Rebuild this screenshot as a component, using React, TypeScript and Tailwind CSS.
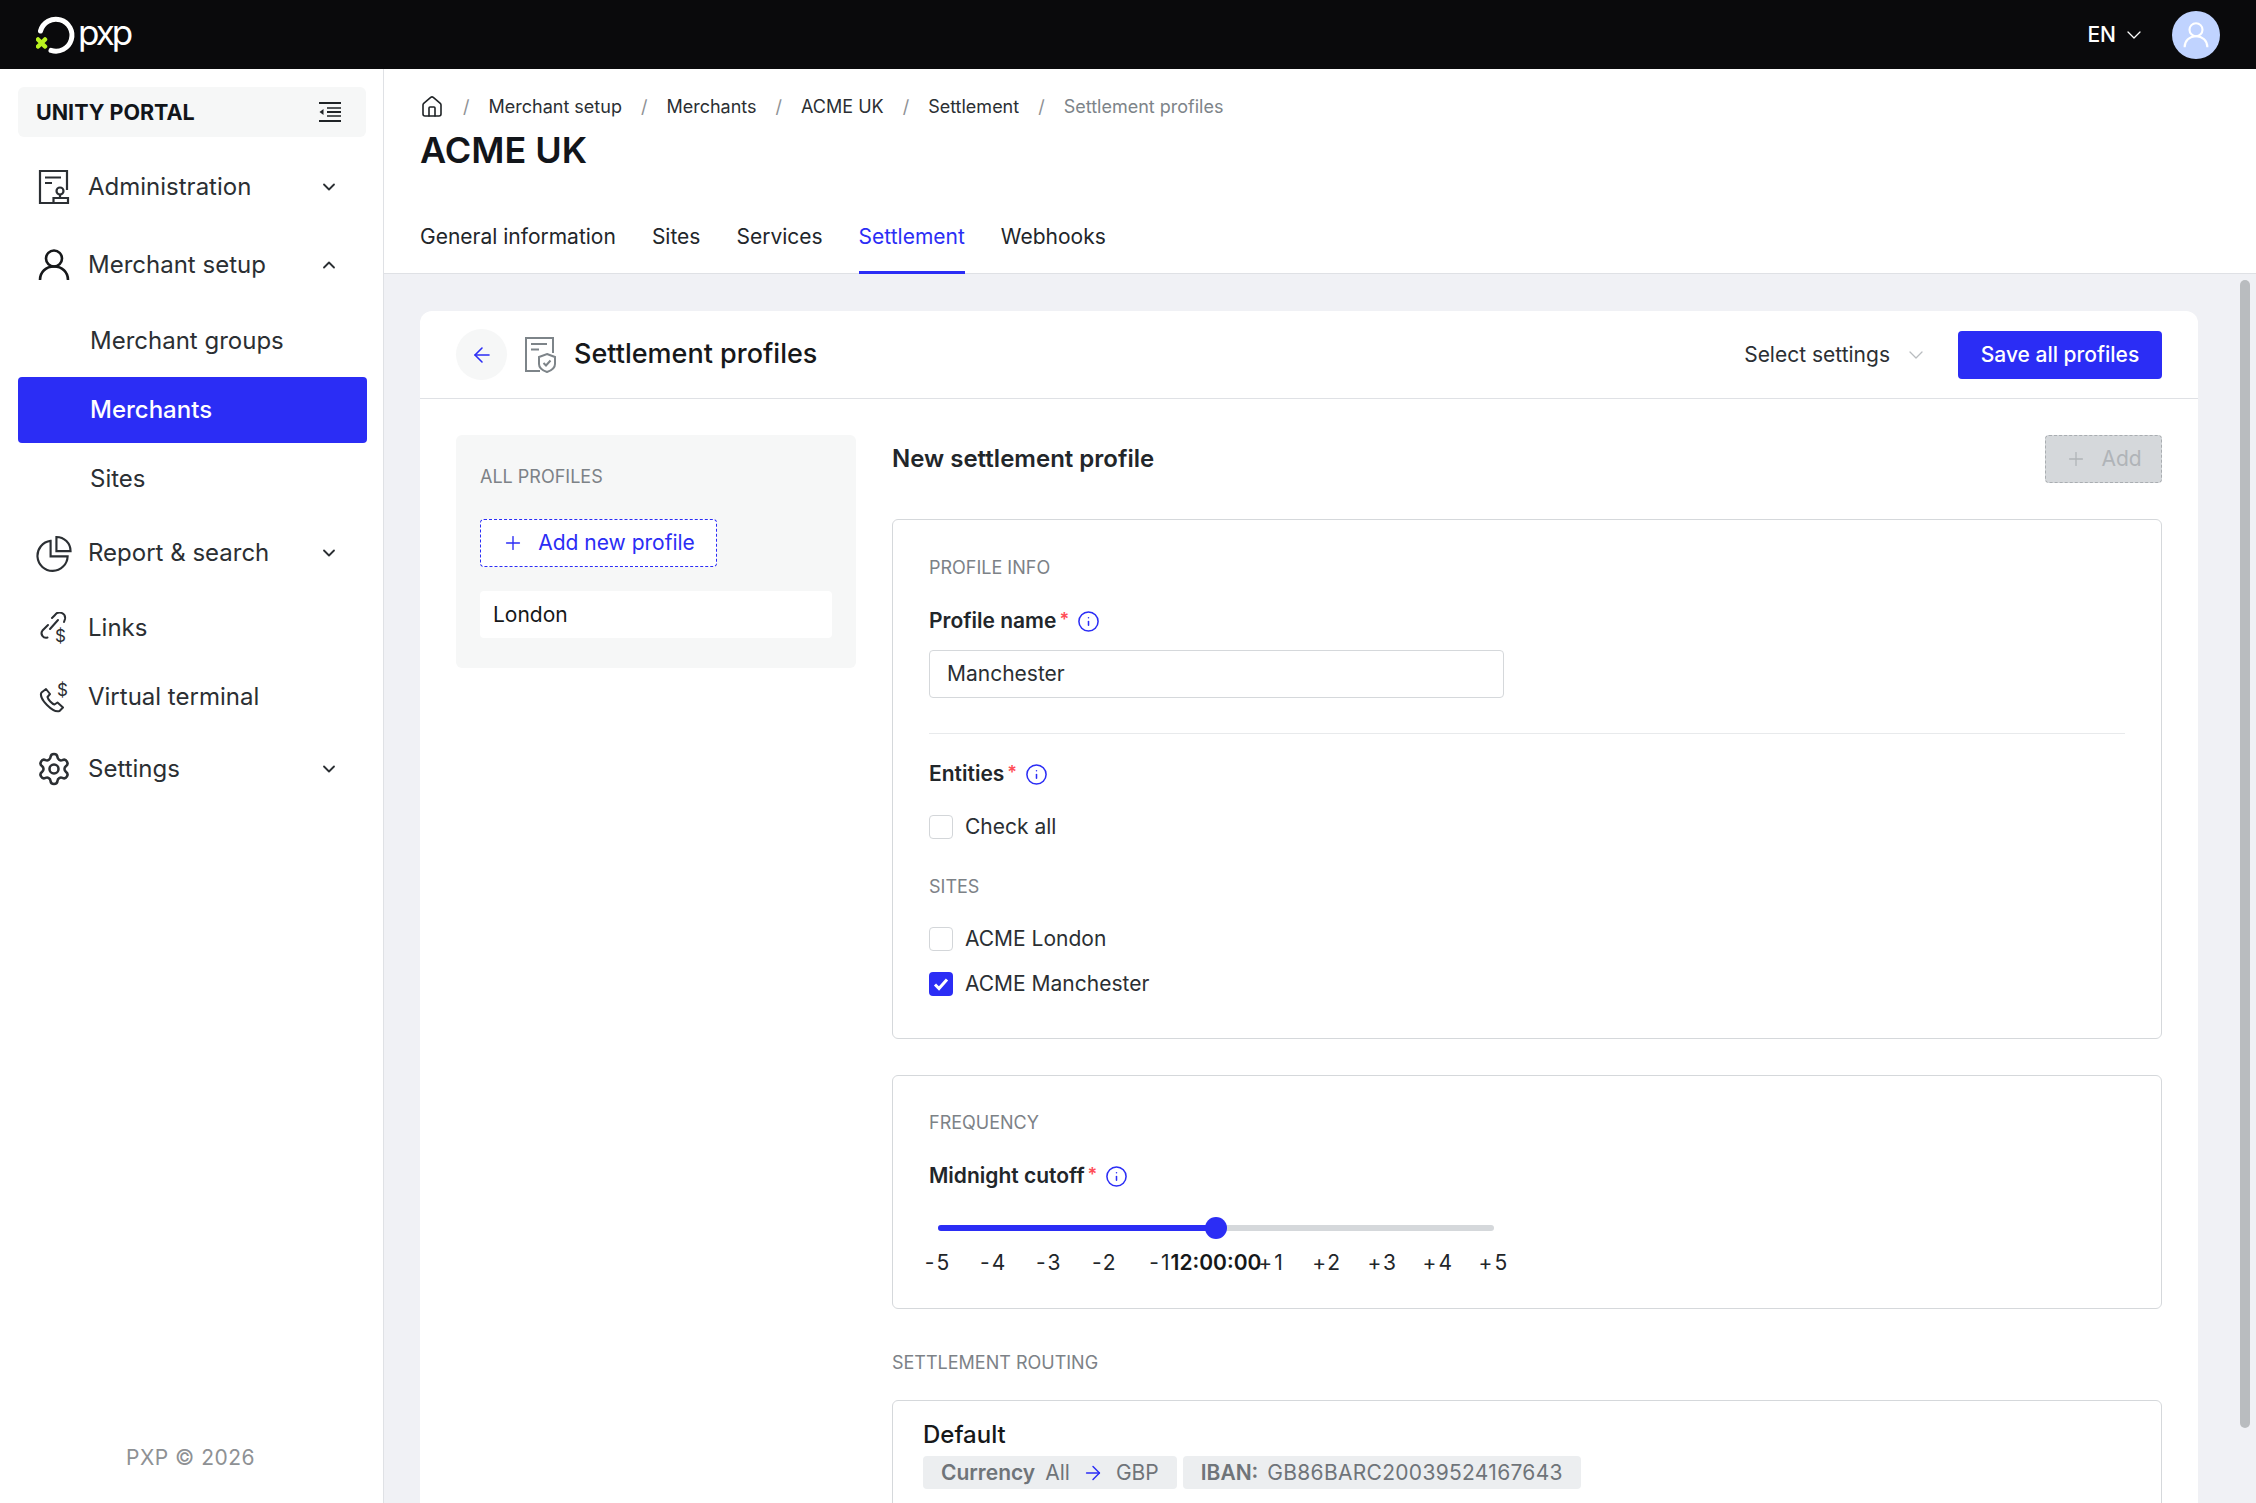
import { ArrowLeft, ArrowRight, ChevronDown, ChevronUp, House, Info, Plus, Settings as Gear } from 'lucide-react';
import type { ReactNode } from 'react';

const BLUE_TEXT = 'text-[#2b2df5]';

function PxpLogo() {
  return (
    <div className="flex items-center ml-[36px]">
      <svg width="42" height="42" viewBox="36 14 42 42" fill="none">
        <path d="M51 50.4A16 16 0 1 0 40.5 31" stroke="#fff" strokeWidth="5" strokeLinecap="round" />
        <path d="M38 39.5l7 7M45 39.5l-7 7" stroke="#b9f21f" strokeWidth="4.5" strokeLinecap="round" />
      </svg>
      <span className="text-white text-[35px] leading-[40px] tracking-[-3px] -mt-[5px]">pxp</span>
    </div>
  );
}

function AdminIcon() {
  return (
    <svg width="32" height="36" viewBox="0 0 32 36" fill="none" stroke="#2b2f33" strokeWidth="2.2">
      <path d="M16 34H2V2h27v19" />
      <path d="M7 8.5h16M7 14h7" />
      <circle cx="22" cy="22" r="3.5" />
      <path d="M22 25.5V29M15.5 29h14.5v5H15.5z" />
    </svg>
  );
}

function UserIcon({ color = '#16181a', size = 32 }: { color?: string; size?: number }) {
  return (
    <svg width={size} height={size} viewBox="0 0 32 32" fill="none" stroke={color} strokeWidth="2.6">
      <circle cx="16" cy="9.5" r="8" />
      <path d="M2 31c0-8 6-13.5 14-13.5S30 23 30 31" />
    </svg>
  );
}

function PieIcon() {
  return (
    <svg width="37" height="37" viewBox="0 0 37 37" fill="none" stroke="#2b2f33" strokeWidth="2.2">
      <path d="M15 5.5A15.5 15.5 0 1 0 32.5 21.5H15z" />
      <path d="M21 1.5a14.5 14.5 0 0 1 14.5 14.5H21z" />
    </svg>
  );
}

function LinkDollarIcon() {
  return (
    <svg width="30" height="32" viewBox="0 0 30 32" fill="none" stroke="#2b2f33" strokeWidth="2">
      <path d="M9 13l-5.5 5.5a4.5 4.5 0 0 0 5 7" strokeLinecap="round" />
      <path d="M11 17l8-9" strokeLinecap="round" />
      <path d="M13 6l3-3a5.5 5.5 0 0 1 10 4l-1 3" strokeLinecap="round" />
      <text x="16" y="30" fontSize="17" fill="#2b2f33" stroke="none" fontFamily="Inter, sans-serif">$</text>
    </svg>
  );
}

function PhoneDollarIcon() {
  return (
    <svg width="30" height="32" viewBox="0 0 30 32" fill="none" stroke="#2b2f33" strokeWidth="2">
      <path d="M7 8L2.5 11.5C1 14 3 19 8 24s10 7 12.5 6l3.5-3.5-5.5-5-3 2C13 23 9 18.500 8.500 16l2.500-3z" strokeLinejoin="round" />
      <text x="18" y="15" fontSize="17" fill="#2b2f33" stroke="none" fontFamily="Inter, sans-serif">$</text>
    </svg>
  );
}

function MenuToggleIcon() {
  return (
    <svg width="22" height="20" viewBox="0 0 22 20" fill="none" stroke="#1f2326" strokeWidth="2">
      <path d="M0 1h22M8 10h14M0 19h22M8 5h0" />
      <path d="M4.500 7v6L0.500 10z" fill="#1f2326" stroke="none" />
      <path d="M8 6h14M8 14h14" strokeWidth="1.500" />
    </svg>
  );
}

function SettlementDocIcon() {
  return (
    <svg width="31" height="36" viewBox="0 0 31 36" fill="none" stroke="#7d8489" strokeWidth="2">
      <path d="M15 34H1V1h27v15" />
      <path d="M6 7h16M6 12.500h8" />
      <path d="M22 17l8 3v7c0 3.500-3.500 6.500-8 8-4.500-1.500-8-4.500-8-8v-7z" fill="#fff" />
      <path d="M18.500 26l2.500 2.500 4.500-5" />
    </svg>
  );
}

function NavRow({ icon, label, height, open, expandable }: { icon: ReactNode; label: string; height: string; open?: boolean; expandable?: boolean }) {
  return (
    <div className={`flex items-center pl-[36px] pr-[44px] ${height}`}>
      <div className="w-[36px] flex justify-center shrink-0">{icon}</div>
      <span className="ml-[16px] text-[24px] leading-[32px] text-[#2b2f33]">{label}</span>
      {expandable && (
        <span className="ml-auto">
          {open ? <ChevronUp size={20} color="#2b2f33" strokeWidth={2.2} /> : <ChevronDown size={20} color="#2b2f33" strokeWidth={2.2} />}
        </span>
      )}
    </div>
  );
}

function Sidebar() {
  return (
    <aside className="w-[384px] shrink-0 border-r border-[#dfe1e5] bg-white pt-[18px] flex flex-col pb-[30px]">
      <div className="mx-[18px] h-[50px] w-[348px] rounded-md bg-[#f6f7f7] flex items-center justify-between pl-[18px] pr-[25px]">
        <span className="text-[21.5px] font-bold text-[#12151a]">UNITY PORTAL</span>
        <MenuToggleIcon />
      </div>
      <div className="mt-[11px]">
        <NavRow icon={<AdminIcon />} label="Administration" height="h-[78px]" expandable />
        <NavRow icon={<UserIcon />} label="Merchant setup" height="h-[78px]" expandable open />
      </div>
      <div className="mt-[4px] flex flex-col gap-[3px]">
        <div className="h-[66px] flex items-center pl-[90px] text-[24px] text-[#2b2f33]">Merchant groups</div>
        <div className="h-[66px] mx-[18px] w-[349px] rounded bg-[#2b2df5] flex items-center pl-[72px] text-[24px] font-medium text-white">Merchants</div>
        <div className="h-[66px] flex items-center pl-[90px] text-[24px] text-[#2b2f33]">Sites</div>
      </div>
      <div className="mt-[2px]">
        <NavRow icon={<PieIcon />} label="Report & search" height="h-[78px]" expandable />
        <NavRow icon={<LinkDollarIcon />} label="Links" height="h-[72px]" />
        <NavRow icon={<PhoneDollarIcon />} label="Virtual terminal" height="h-[66px]" />
        <NavRow icon={<Gear size={38} color="#2b2f33" strokeWidth={1.7} />} label="Settings" height="h-[78px]" expandable />
      </div>
      <div className="mt-auto text-center text-[21px] text-[#8e9194] tracking-[0.5px] pr-[2px]">PXP © 2026</div>
    </aside>
  );
}

function Crumbs() {
  const items = ['Merchant setup', 'Merchants', 'ACME UK', 'Settlement'];
  return (
    <div className="flex items-center gap-[19px] h-[27px] text-[18px] leading-[27px] text-[#2b2f33]">
      <House size={24} strokeWidth={1.6} color="#1f2326" />
      {items.map(item => (
        <div key={item} className="contents">
          <span className="text-[#8e9194]">/</span>
          <span>{item}</span>
        </div>
      ))}
      <span className="text-[#8e9194]">/</span>
      <span className="text-[#7d8489]">Settlement profiles</span>
    </div>
  );
}

function Label({ text }: { text: string }) {
  return (
    <div className="flex items-center h-[30px] text-[21px] leading-[30px] font-semibold text-[#22262a]">
      <span>{text}</span>
      <span className="ml-[3px] text-[#ff4d57] text-[18px] leading-[18px] -mt-[3px]">*</span>
      <Info size={23} color="#2b2df5" strokeWidth={1.6} className="ml-[8px]" />
    </div>
  );
}

function Caption({ text, className = '' }: { text: string; className?: string }) {
  return <div className={`text-[18px] leading-[24px] text-[#7d8287] ${className}`}>{text}</div>;
}

function Check({ label, checked, className = '' }: { label: string; checked?: boolean; className?: string }) {
  return (
    <div className={`flex items-center h-[30px] ${className}`}>
      {checked ? (
        <span className="w-[24px] h-[24px] rounded bg-[#2b2df5] flex items-center justify-center">
          <svg width="16" height="14" viewBox="0 0 16 14" fill="none" stroke="#fff" strokeWidth="3"><path d="M2 7.500l4 4 8-9" /></svg>
        </span>
      ) : (
        <span className="w-[24px] h-[24px] rounded border border-[#d3d6d9] bg-white" />
      )}
      <span className="ml-[12px] text-[21px] text-[#2b2f33]">{label}</span>
    </div>
  );
}

function CutoffSlider() {
  const ticks = ['-5', '-4', '-3', '-2', '-1', '', '+1', '+2', '+3', '+4', '+5'];
  return (
    <div className="ml-[9px] w-[556px]">
      <div className="relative mt-[34px] h-[6px] rounded-full bg-[#d5d8db]">
        <div className="h-[6px] w-1/2 rounded-full bg-[#2b2df5]" />
        <div className="absolute left-1/2 top-1/2 -translate-x-1/2 -translate-y-1/2 w-[22px] h-[22px] rounded-full bg-[#2b2df5]" />
      </div>
      <div className="relative mt-[17px] flex justify-between h-[30px] text-[21px] leading-[30px] text-[#22262a]">
        {ticks.map((tick, i) => (
          <div key={i} className="w-0 flex justify-center whitespace-nowrap tracking-[2px]">{tick}</div>
        ))}
        <div className="absolute left-1/2 top-0 -translate-x-1/2 font-semibold text-[#16181a]">12:00:00</div>
      </div>
    </div>
  );
}

function ProfileForm() {
  return (
    <div className="flex-1 min-w-0">
      <div className="h-[48px] flex items-center justify-between">
        <h2 className="text-[24px] font-semibold text-[#22262a]">New settlement profile</h2>
        <button className="w-[117px] h-[48px] rounded border border-dashed border-[#a9adb1] bg-[#d5d8db] flex items-center justify-center gap-[14px] text-[21px] text-[#b0b4b8]">
          <Plus size={22} strokeWidth={1.4} />
          Add
        </button>
      </div>

      <section className="mt-[36px] rounded-md border border-[#d5d8db] px-[36px] pt-[36px] pb-[39px]">
        <Caption text="PROFILE INFO" />
        <div className="mt-[26px]"><Label text="Profile name" /></div>
        <div className="mt-[14px] w-[575px] h-[48px] rounded border border-[#d5d8db] flex items-center px-[17px] text-[21px] text-[#2b2f33]">Manchester</div>
        <div className="mt-[35px] h-px bg-[#e8eaec]" />
        <div className="mt-[25px]"><Label text="Entities" /></div>
        <Check label="Check all" className="mt-[23px]" />
        <Caption text="SITES" className="mt-[33px]" />
        <Check label="ACME London" className="mt-[25px]" />
        <Check label="ACME Manchester" checked className="mt-[15px]" />
      </section>

      <section className="mt-[36px] rounded-md border border-[#d5d8db] px-[36px] pt-[35px] pb-[30px]">
        <Caption text="FREQUENCY" />
        <div className="mt-[26px]"><Label text="Midnight cutoff" /></div>
        <CutoffSlider />
      </section>

      <Caption text="SETTLEMENT ROUTING" className="mt-[42px]" />

      <section className="mt-[25px] rounded-md border border-[#d5d8db] px-[30px] pt-[18px] pb-[30px]">
        <div className="text-[24px] leading-[32px] font-medium text-[#16181a]">Default</div>
        <div className="mt-[5px] flex gap-[6px] text-[21px] leading-[33px] text-[#6f7479]">
          <div className="h-[33px] rounded bg-[#eceef0] px-[18px] flex items-center">
            <span className="font-semibold">Currency</span>
            <span className="ml-[10px]">All</span>
            <ArrowRight size={22} color="#2b2df5" strokeWidth={1.6} className="mx-[12px]" />
            <span>GBP</span>
          </div>
          <div className="h-[33px] rounded bg-[#eceef0] px-[18px] flex items-center">
            <span className="font-semibold">IBAN:</span>
            <span className="ml-[9px] tracking-[0.3px]">GB86BARC20039524167643</span>
          </div>
        </div>
      </section>
    </div>
  );
}

export default function App() {
  return (
    <div className="h-screen overflow-hidden flex flex-col bg-white font-['Inter',sans-serif]">
      <header className="h-[69px] shrink-0 bg-[#0a0a0c] flex items-center justify-between">
        <PxpLogo />
        <div className="flex items-center mr-[36px]">
          <span className="text-[21px] text-white font-medium">EN</span>
          <ChevronDown size={24} color="#fff" strokeWidth={1.3} className="ml-[6px]" />
          <div className="ml-[26px] w-[48px] h-[48px] rounded-full bg-[#c0d3ff] flex items-center justify-center">
            <UserIcon color="#fff" size={26} />
          </div>
        </div>
      </header>

      <div className="flex-1 min-h-0 flex">
        <Sidebar />

        <main className="flex-1 min-w-0 flex flex-col bg-[#f0f1f5] relative">
          <div className="h-[205px] shrink-0 bg-white border-b border-[#dfe1e5] pl-[36px] pt-[24px] flex flex-col">
            <Crumbs />
            <h1 className="mt-[8px] text-[36px] leading-[44px] font-semibold text-[#12151a]">ACME UK</h1>
            <nav className="mt-auto -mb-px flex gap-[36px] text-[21px] leading-[30px] text-[#22262a]">
              <span className="pb-[22px]">General information</span>
              <span className="pb-[22px]">Sites</span>
              <span className="pb-[22px]">Services</span>
              <span className={`pb-[19px] border-b-[3px] border-[#2b2df5] ${BLUE_TEXT}`}>Settlement</span>
              <span className="pb-[22px]">Webhooks</span>
            </nav>
          </div>

          <div className="flex-1 min-h-0 overflow-hidden pl-[36px] pr-[58px] pt-[37px]">
            <div className="bg-white rounded-t-xl">
              <div className="h-[88px] border-b border-[#dfe1e5] px-[36px] flex items-center">
                <div className="w-[51px] h-[51px] rounded-full bg-[#f6f7f7] flex items-center justify-center">
                  <ArrowLeft size={24} color="#2b2df5" strokeWidth={1.6} />
                </div>
                <div className="ml-[18px]"><SettlementDocIcon /></div>
                <span className="ml-[18px] text-[27px] font-medium text-[#16181a]">Settlement profiles</span>
                <div className="ml-auto flex items-center text-[21px] text-[#2b2f33]">
                  Select settings
                  <ChevronDown size={24} color="#b9bcbf" strokeWidth={1.3} className="ml-[14px]" />
                </div>
                <button className="ml-[30px] w-[204px] h-[48px] rounded bg-[#2b2df5] text-white text-[21px] font-medium">Save all profiles</button>
              </div>

              <div className="flex gap-[36px] p-[36px]">
                <aside className="w-[400px] h-[233px] shrink-0 rounded-md bg-[#f6f7f7] px-[24px] pt-[30px]">
                  <Caption text="ALL PROFILES" />
                  <button className={`mt-[30px] w-[237px] h-[48px] rounded border-[1.5px] border-dashed border-[#2b2df5] bg-white flex items-center justify-center gap-[14px] text-[21px] ${BLUE_TEXT}`}>
                    <Plus size={22} strokeWidth={1.5} />
                    Add new profile
                  </button>
                  <div className="mt-[24px] h-[47px] rounded bg-white flex items-center px-[13px] text-[21px] text-[#16181a]">London</div>
                </aside>
                <ProfileForm />
              </div>
            </div>
          </div>

          <div className="absolute right-[6px] top-[211px] w-[10px] h-[1148px] rounded-full bg-[#b9bcbf]" />
        </main>
      </div>
    </div>
  );
}
